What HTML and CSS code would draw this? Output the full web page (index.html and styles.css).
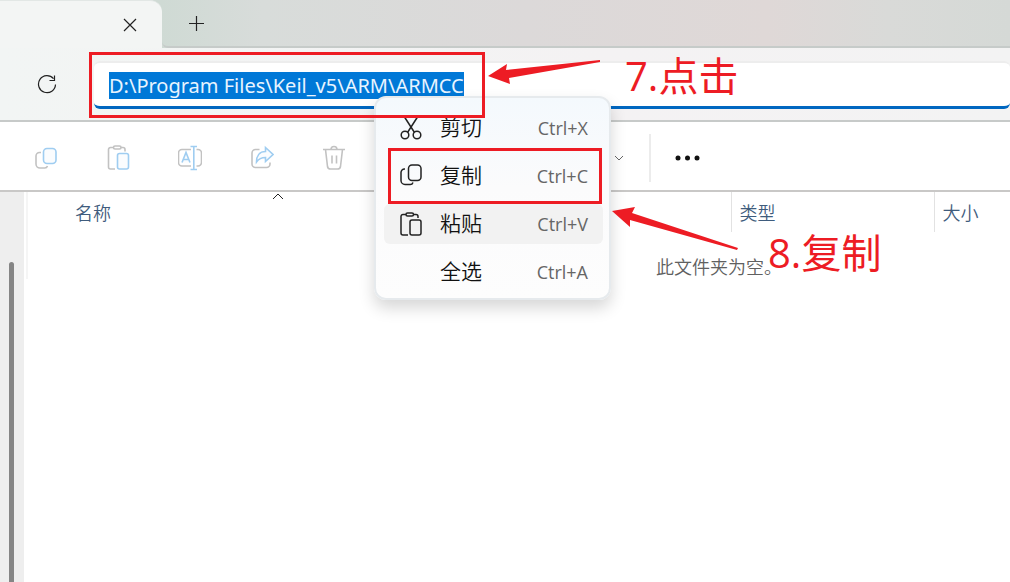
FILE: index.html
```html
<!DOCTYPE html>
<html lang="zh-CN">
<head>
  <meta charset="UTF-8">
  <title>ARMCC</title>
  <link rel="stylesheet" href="styles.css">
</head>
<body>
  <div class="window">
    <header class="tabs">
      <div class="tab">
        <button class="icon-btn close" aria-label="关闭">
          <svg width="14" height="14" viewBox="0 0 14 14"><path d="M1 1l12 12M13 1L1 13"/></svg>
        </button>
      </div>
      <button class="icon-btn new-tab" aria-label="新建标签页">
        <svg width="16" height="16" viewBox="0 0 16 16"><path d="M8.500 1v15M1 8.500h15"/></svg>
      </button>
    </header>

    <div class="address-row">
      <button class="icon-btn refresh" aria-label="刷新">
        <svg width="20" height="20" viewBox="0 0 20 20"><path d="M16.5 4.700A8.500 8.500 0 1 0 18.500 10.500M17.500 1.500v5h-5"/></svg>
      </button>
      <input class="address" id="address" type="text" aria-label="地址" spellcheck="false" value="D:\Program Files\Keil_v5\ARM\ARMCC">
    </div>

    <!-- 工具栏 -->
    <div class="toolbar">
      <button class="tool" aria-label="复制">
        <svg width="24" height="26" viewBox="0 0 24 26"><path d="M7 7.500H5.500a3.500 3.500 0 0 0-3.500 3.500v8A4 4 0 0 0 6 23h4.500a3 3 0 0 0 3-2"/><rect class="blue" x="9.500" y="3.500" width="12.500" height="15" rx="3.500"/></svg>
      </button>
      <button class="tool" aria-label="粘贴">
        <svg width="24" height="26" viewBox="0 0 24 26"><path d="M7 2.500H4.500a2 2 0 0 0-2 2v17.500a2 2 0 0 0 2 2H9M15 2.500h2a2 2 0 0 1 2 2v2"/><rect x="7.500" y="1" width="7.500" height="3" rx="1.500"/><rect class="blue" x="11.500" y="8.500" width="11" height="15.500" rx="2"/></svg>
      </button>
      <button class="tool" aria-label="重命名">
        <svg width="24" height="26" viewBox="1 0 24 26"><path d="M14 4.500H5a3.500 3.500 0 0 0-3.500 3.500v9.500A3.500 3.500 0 0 0 5 21h9M19.500 4.500H21a3.500 3.500 0 0 1 3.500 3.500v9.500A3.500 3.500 0 0 1 21 21h-1.500"/><path class="blue" d="M13.500 1.500h6.500M13.500 24.500h6.500M16.800 1.500v23M5 17.500l4-10 4 10M6.500 14.500h5"/></svg>
      </button>
      <button class="tool" aria-label="共享">
        <svg width="24" height="26" viewBox="0 0 24 26"><path d="M9.500 4.500H5.500A3.500 3.500 0 0 0 2 8v11A3.500 3.500 0 0 0 5.500 22.500h11a3.500 3.500 0 0 0 3.500-3.500V17.500"/><path class="blue" d="M15.500 2.500l7.500 7-7.500 7v-4c-4 0-6.500 1-9 4.500 0-6 3-10.500 9-10.500z"/></svg>
      </button>
      <button class="tool" aria-label="删除">
        <svg width="24" height="26" viewBox="0 0 24 26"><path d="M1 4.500h22M9 4.500a3 3 0 0 1 6 0M3.500 4.500l2 17a3 3 0 0 0 3 2.500h7a3 3 0 0 0 3-2.500l2-17M10 10.500v8M14.500 10.500v8"/></svg>
      </button>
      <span class="divider"></span>
      <button class="tool view" aria-label="查看">
        <svg width="10" height="6" viewBox="0 0 10 6"><path d="M1 1l4 4 4-4"/></svg>
      </button>
      <span class="divider"></span>
      <button class="tool more" aria-label="更多">
        <svg width="26" height="6" viewBox="0 0 26 6"><circle cx="3" cy="3" r="2.500"/><circle cx="12.500" cy="3" r="2.500"/><circle cx="22" cy="3" r="2.500"/></svg>
      </button>
    </div>

    <main class="content">
      <aside class="side"><div class="thumb"></div></aside>
      <table class="files">
        <thead>
          <tr>
            <th class="name">名称
              <svg class="sort" width="12" height="7" viewBox="0 0 12 7"><path d="M1 6l5-5 5 5"/></svg>
            </th>
            <th class="type">类型</th>
            <th class="size">大小</th>
          </tr>
        </thead>
        <tbody>
          <tr><td class="empty" colspan="3">此文件夹为空。</td></tr>
        </tbody>
      </table>
    </main>
  </div>

  <!-- 右键菜单 -->
  <div class="menu">
    <button class="item">
      <svg width="22" height="24" viewBox="0 0 22 24"><path d="M4.500 1l10 15.500M17.500 1l-10 15.500"/><circle cx="5" cy="19" r="3.800"/><circle cx="17" cy="19" r="3.800"/></svg>
      <span>剪切</span><kbd>Ctrl+X</kbd>
    </button>
    <button class="item">
      <svg width="22" height="24" viewBox="0 0 22 24"><path d="M5 5H4.500A3.500 3.500 0 0 0 1 8.500v8A4 4 0 0 0 5 20.500h5a3 3 0 0 0 3-2"/><rect x="8.500" y="1" width="12.500" height="15.500" rx="3.500"/></svg>
      <span>复制</span><kbd>Ctrl+C</kbd>
    </button>
    <button class="item active">
      <svg width="22" height="24" viewBox="0 0 22 24"><path d="M6 2.500H3a2 2 0 0 0-2 2V21a2 2 0 0 0 2 2h5M13.500 2.500H16a2 2 0 0 1 2 2V6"/><rect x="6" y="1" width="7.500" height="3" rx="1.500"/><rect x="10" y="8" width="11" height="15" rx="2"/></svg>
      <span>粘贴</span><kbd>Ctrl+V</kbd>
    </button>
    <button class="item">
      <svg width="22" height="24" viewBox="0 0 22 24"></svg>
      <span>全选</span><kbd>Ctrl+A</kbd>
    </button>
  </div>

  <!-- 步骤标注 -->
  <div class="box box-address"></div>
  <div class="box box-copy"></div>
  <svg class="arrow arrow-address" width="114" height="26" viewBox="0 0 114 26"><path d="M0 16L19 4l-1 6L112 0v2L21 18l1 6z"/></svg>
  <svg class="arrow arrow-copy" width="128" height="44" viewBox="0 0 128 44"><path d="M0 5L23 1l-3 6L126 42l-1 2L18 14v7z"/></svg>
  <div class="note note-address">7.点击</div>
  <div class="note note-copy">8.复制</div>

  <script>
    document.getElementById('address').focus();
    document.getElementById('address').select();
  </script>
</body>
</html>
```
FILE: styles.css
```css
* { box-sizing: border-box; }
body { margin: 0; background: #fff; font-family: "Open Sans", "Noto Sans CJK SC", sans-serif; overflow: hidden; }
button { border: 0; background: none; padding: 0; font: inherit; color: inherit; }
svg { display: block; fill: none; stroke: #222; stroke-width: 1.5; }
.window { height: 100vh; display: flex; flex-direction: column; }

.tabs { display: flex; height: 48px; background: linear-gradient(90deg, #cfdad4 16%, #d8dcda 26%, #dcd9d9 52%, #dfd8d7 76%, #d9dad8 88%, #d5d9d6); }
.tab { width: 162px; background: #f3f5f4; border-top: 1px solid #e2e7e5; border-radius: 0 12px 0 0; display: flex; justify-content: flex-end; padding-right: 25px; }
.icon-btn { display: flex; align-items: center; justify-content: center; }
.close { width: 14px; }
.close svg, .new-tab svg, .refresh svg { stroke-width: 1.2; }
.new-tab { flex: 1; justify-content: flex-start; padding-left: 26px; border-bottom: 2px solid #c6cbc9; border-radius: 0 0 0 6px; }

.address-row { display: flex; align-items: center; height: 74px; padding-left: 37px; background: linear-gradient(90deg, #f2f5f4, #f4f2f3 60%, #f3f3f3); border-bottom: 2px solid #c7cac9; }
.refresh { width: 20px; margin-right: 37px; }
.address { flex: 1; min-width: 0; height: 48px; margin-top: 1px; padding: 2px 15px 0; border: 0; border-top: 2px solid #ededed; border-bottom: 3px solid #0067c0; border-radius: 6px; background: #fff; outline: 0; font: 20px/28px "Noto Sans", sans-serif; }
.address::selection { background: #0078d7; color: #e8f4ff; }

.toolbar { display: flex; align-items: center; height: 70px; flex: none; padding: 3px 0 0 34px; background: #fff; border-bottom: 2px solid #c9c8c7; }
.tool { width: 24px; margin-right: 48px; }
.tool svg { stroke: #c2c2c2; stroke-width: 1.6; }
.tool .blue { stroke: #9fcdf1; fill: #fafcfe; }
.divider { width: 2px; height: 48px; background: #ececec; }
.tool + .divider { margin-left: -20px; }
.view { width: 10px; margin: 0 25px 0 238px; }
.view svg { stroke: #666; stroke-width: 1; }
.view + .divider { margin-left: 0; }
.more { width: 26px; margin: 0 0 0 24px; }
.more svg { fill: #111; stroke: none; }

.content { flex: 1; display: flex; }
.side { width: 24px; margin-right: 2px; background: #eee; padding: 70px 0 0 9px; display: flex; }
.thumb { width: 5px; background: #858585; border-radius: 3px 3px 0 0; }
.files { flex: 1; align-self: flex-start; border-collapse: collapse; table-layout: fixed; border-left: 2px solid #f5f5f5; font-size: 18px; line-height: 24px; }
th { position: relative; height: 40px; padding: 1px 0 0 8px; text-align: left; font-weight: 350; color: #3f5c7d; border-right: 1px solid #e2e2e2; }
th:last-child { border-right: 0; }
.name { padding-left: 47px; }
.type { width: 203px; }
.size { width: 76px; }
.sort { position: absolute; top: 1px; left: 244px; stroke-width: 1; }
.empty { padding: 23px 0 0 628px; font-weight: 350; color: #606060; }

.menu { position: absolute; left: 374px; top: 96px; width: 237px; padding: 10px 6px 6px 8px; border: 2px solid #e6eaed; border-radius: 12px; background: linear-gradient(#f4f9fd, #fbfbfc 45%, #fdfdfd); box-shadow: 0 8px 16px rgba(0, 0, 0, .16); display: flex; flex-direction: column; gap: 8px; }
.item { display: flex; align-items: center; height: 40px; padding: 0 15px 0 16px; border-radius: 6px; font-size: 21px; color: #111; }
.item span { margin-left: 18px; padding-bottom: 4px; font-weight: 350; }
.item kbd { margin-left: auto; font: 18px/24px "Open Sans", sans-serif; color: #666; }
.active { background: #f2f2f2; }

.box { position: absolute; border: 3px solid #ed1c24; }
.box-address { left: 89px; top: 52px; width: 396px; height: 66px; }
.box-copy { left: 388px; top: 148px; width: 214px; height: 56px; }
.arrow { position: absolute; fill: #ed1c24; stroke: none; }
.arrow-address { left: 488px; top: 60px; }
.arrow-copy { left: 612px; top: 206px; }
.note { position: absolute; font-size: 40px; line-height: 48px; color: #ed1c24; }
.note-address { left: 625px; top: 52px; }
.note-copy { left: 768px; top: 229px; }
```
